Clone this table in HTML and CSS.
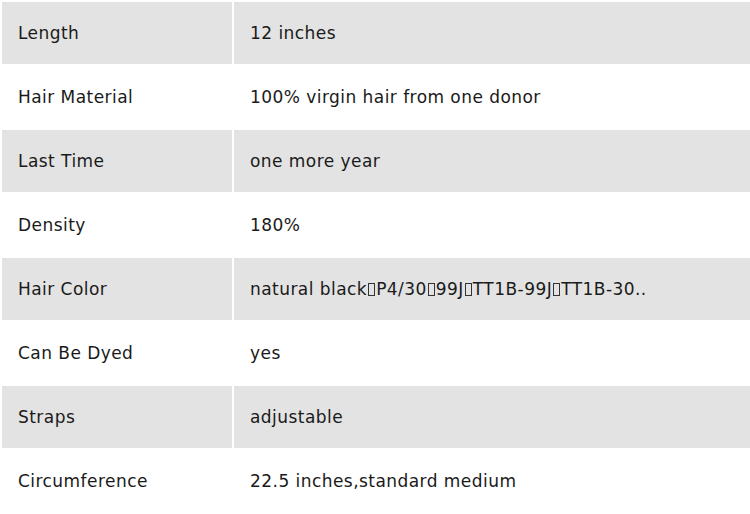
FILE: index.html
```html
<!DOCTYPE html>
<html>
<head>
<meta charset="utf-8">
<link rel="stylesheet" href="styles.css">
</head>
<body>
<table class="spec">
  <tr class="alt"><td class="key">Length</td><td class="val">12 inches</td></tr>
  <tr><td class="key">Hair Material</td><td class="val">100% virgin hair from one donor</td></tr>
  <tr class="alt"><td class="key">Last Time</td><td class="val">one more year</td></tr>
  <tr><td class="key">Density</td><td class="val">180%</td></tr>
  <tr class="alt"><td class="key">Hair Color</td><td class="val">natural black<span class="tofu"></span>P4/30<span class="tofu"></span>99J<span class="tofu"></span>TT1B-99J<span class="tofu"></span>TT1B-30..</td></tr>
  <tr><td class="key">Can Be Dyed</td><td class="val">yes</td></tr>
  <tr class="alt"><td class="key">Straps</td><td class="val">adjustable</td></tr>
  <tr><td class="key">Circumference</td><td class="val">22.5 inches,standard medium</td></tr>
</table>
</body>
</html>
```
FILE: styles.css
```css
html, body {
  margin: 0;
  padding: 0;
  background: #ffffff;
  overflow: hidden;
}
.spec {
  border-collapse: separate;
  border-spacing: 2px;
  width: 752px;
  table-layout: fixed;
  font-family: "DejaVu Sans", Verdana, sans-serif;
  font-size: 17px;
  letter-spacing: 0.45px;
  color: #1a1a1a;
}
.spec td {
  height: 62px;
  padding: 0 0 1px 16px;
  box-sizing: border-box;
  vertical-align: middle;
  white-space: nowrap;
}
.spec .key {
  width: 230px;
}
.alt td {
  background: #e3e3e3;
}
.tofu {
  display: inline-block;
  width: 5px;
  height: 11px;
  border: 1px solid #333;
  margin: 0 1px 0 1px;
  vertical-align: -1px;
  letter-spacing: 0;
}
```
